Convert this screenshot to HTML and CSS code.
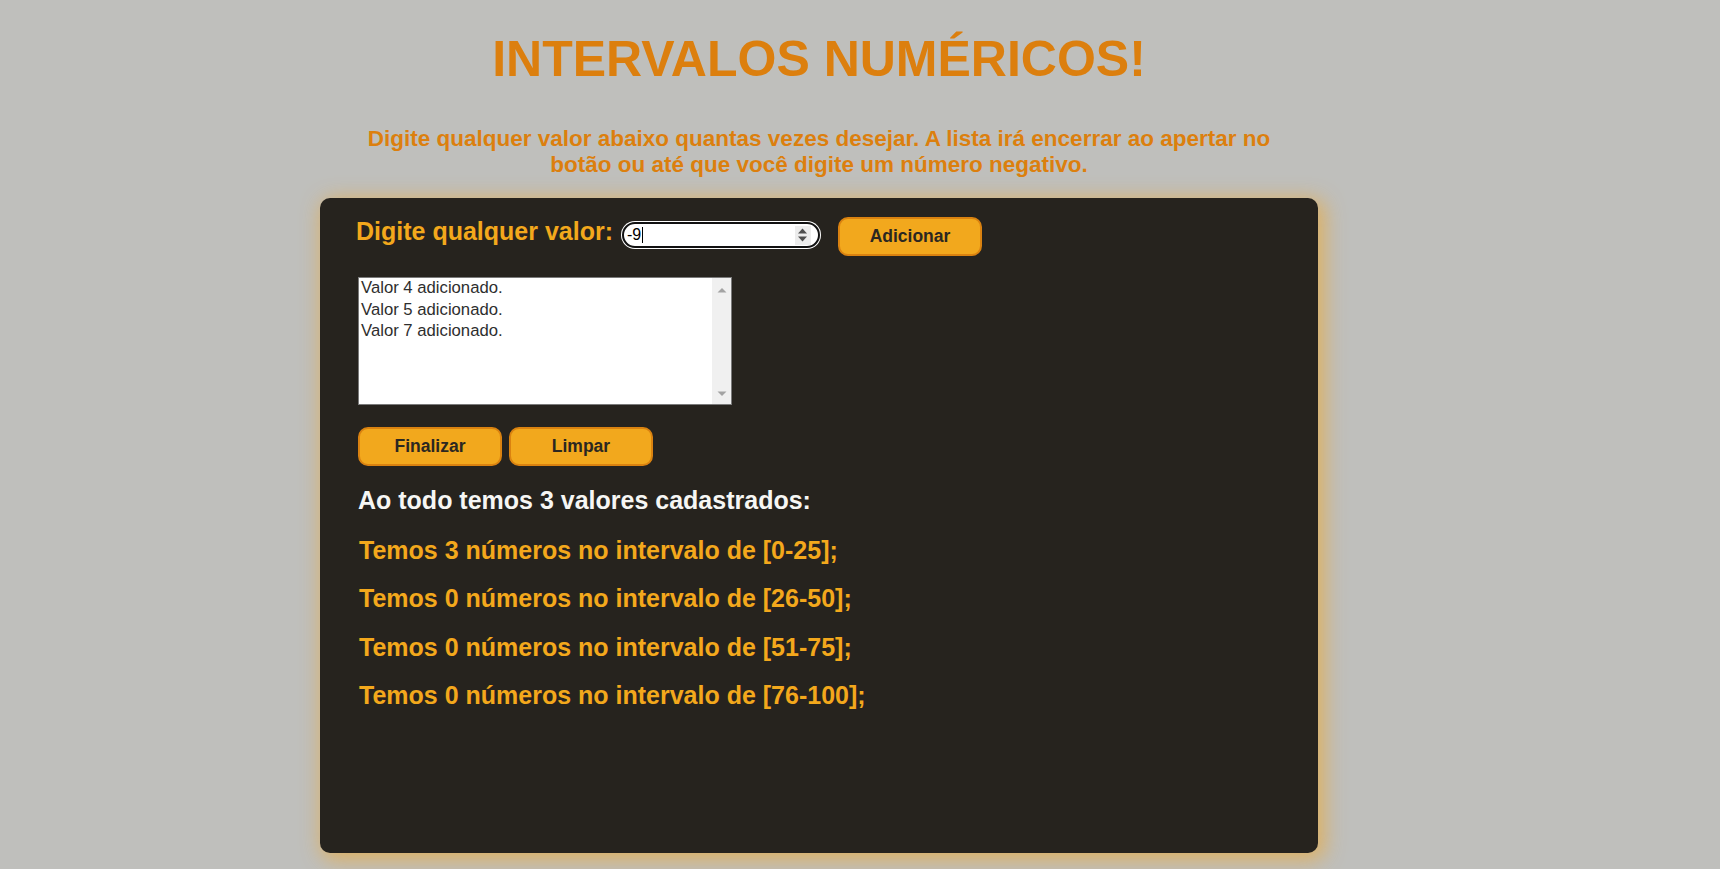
FILE: index.html
```html
<!DOCTYPE html>
<html lang="pt-BR">
<head>
<meta charset="utf-8">
<title>Intervalos Numéricos</title>
<link rel="stylesheet" href="styles.css">
</head>
<body>
<main class="page">
  <h1 class="title">INTERVALOS NUMÉRICOS!</h1>
  <p class="subtitle">Digite qualquer valor abaixo quantas vezes desejar. A lista irá encerrar ao apertar no botão ou até que você digite um número negativo.</p>
  <section class="card">
    <div class="entry-row">
      <label class="entry-label">Digite qualquer valor:</label>
      <div class="number-field">
        <span class="number-value">-9</span><span class="caret"></span>
        <span class="spinner">
          <svg width="11" height="16" viewBox="0 0 11 16"><path d="M1 6.5 L5.5 1.5 L10 6.5 Z" fill="#4f4f4f"/><path d="M1 9.5 L5.5 14.5 L10 9.5 Z" fill="#4f4f4f"/></svg>
        </span>
      </div>
      <button class="btn btn-add">Adicionar</button>
    </div>
    <div class="listbox">
      <div class="listbox-items">
        <div class="listbox-item">Valor 4 adicionado.</div>
        <div class="listbox-item">Valor 5 adicionado.</div>
        <div class="listbox-item">Valor 7 adicionado.</div>
      </div>
      <div class="listbox-scroll">
        <svg width="10" height="6" viewBox="0 0 10 6"><path d="M0.5 5.5 L5 1 L9.5 5.5 Z" fill="#a3a3a3"/></svg>
        <svg width="10" height="6" viewBox="0 0 10 6"><path d="M0.5 0.5 L5 5 L9.5 0.5 Z" fill="#a3a3a3"/></svg>
      </div>
    </div>
    <div class="actions">
      <button class="btn">Finalizar</button>
      <button class="btn">Limpar</button>
    </div>
    <div class="results">
      <p class="total">Ao todo temos 3 valores cadastrados:</p>
      <p class="range">Temos 3 números no intervalo de [0-25];</p>
      <p class="range">Temos 0 números no intervalo de [26-50];</p>
      <p class="range">Temos 0 números no intervalo de [51-75];</p>
      <p class="range">Temos 0 números no intervalo de [76-100];</p>
    </div>
  </section>
</main>
</body>
</html>
```

FILE: styles.css
```css
html, body {
  margin: 0;
  padding: 0;
}

body {
  background: #bfbfbc;
  font-family: "Liberation Sans", Arial, sans-serif;
  height: 869px;
  overflow: hidden;
}

.page {
  width: 998px;
  margin-left: 320px;
  padding-top: 31px;
  display: flex;
  flex-direction: column;
  align-items: center;
}

.title {
  margin: 0;
  font-size: 50px;
  line-height: 56px;
  font-weight: bold;
  color: #dc7f0e;
  text-align: center;
}

.subtitle {
  margin: 39px 0 0;
  width: 940px;
  font-size: 22.5px;
  line-height: 26px;
  font-weight: bold;
  color: #dc7f0e;
  text-align: center;
}

.card {
  box-sizing: border-box;
  width: 998px;
  height: 655px;
  margin-top: 20px;
  padding: 19px 38px 0;
  background: #26231e;
  border-radius: 10px;
  box-shadow: 4px 4px 20px 3px rgba(226, 174, 84, 0.85);
  align-self: stretch;
}

.entry-row {
  display: flex;
  align-items: flex-start;
}

.entry-label {
  margin-left: -2px;
  font-size: 25px;
  line-height: 28px;
  font-weight: bold;
  color: #f3a81c;
}

.number-field {
  box-sizing: border-box;
  width: 198px;
  height: 26px;
  margin: 5px 0 0 9px;
  padding: 0 7px 0 3px;
  display: flex;
  align-items: center;
  background: #fff;
  border: 2px solid #111;
  border-radius: 13px;
  box-shadow: 0 0 0 1px #fff;
}

.number-value {
  font-size: 16px;
  line-height: 18px;
  color: #000;
}

.caret {
  width: 1px;
  height: 16px;
  margin-left: 1px;
  background: #000;
}

.spinner {
  margin-left: auto;
  width: 16px;
  height: 19px;
  background: #ececec;
  display: flex;
  align-items: center;
  justify-content: center;
}

.btn {
  box-sizing: border-box;
  width: 144px;
  height: 39px;
  padding: 0;
  background: #f2a81d;
  border: 2px solid #da8210;
  border-radius: 10px;
  font-family: "Liberation Sans", Arial, sans-serif;
  font-size: 17.5px;
  font-weight: bold;
  color: #2b2721;
}

.btn-add {
  margin-left: 18px;
}

.listbox {
  box-sizing: border-box;
  width: 374px;
  height: 128px;
  margin-top: 21px;
  display: flex;
  background: #fff;
  border: 1px solid #7a7a7a;
}

.listbox-items {
  flex: 1;
  padding: 0 3px 0 2px;
  font-size: 16.7px;
  line-height: 21.6px;
  color: #2e2e2e;
}

.listbox-item {
  white-space: nowrap;
  position: relative;
  top: -1px;
}

.listbox-scroll {
  width: 19px;
  background: #f0f0f0;
  display: flex;
  flex-direction: column;
  justify-content: space-between;
  align-items: center;
  padding: 9px 0 7px;
  box-sizing: border-box;
}

.actions {
  display: flex;
  gap: 7px;
  margin-top: 22px;
}

.results {
  margin-top: 20px;
  display: flex;
  flex-direction: column;
  gap: 20.3px;
}

.results p {
  margin: 0;
  font-size: 25px;
  line-height: 28px;
  font-weight: bold;
}

.total {
  color: #f6f6f4;
  margin-bottom: 1.7px !important;
}

.range {
  color: #f3a81c;
  margin-left: 1px !important;
}
```
